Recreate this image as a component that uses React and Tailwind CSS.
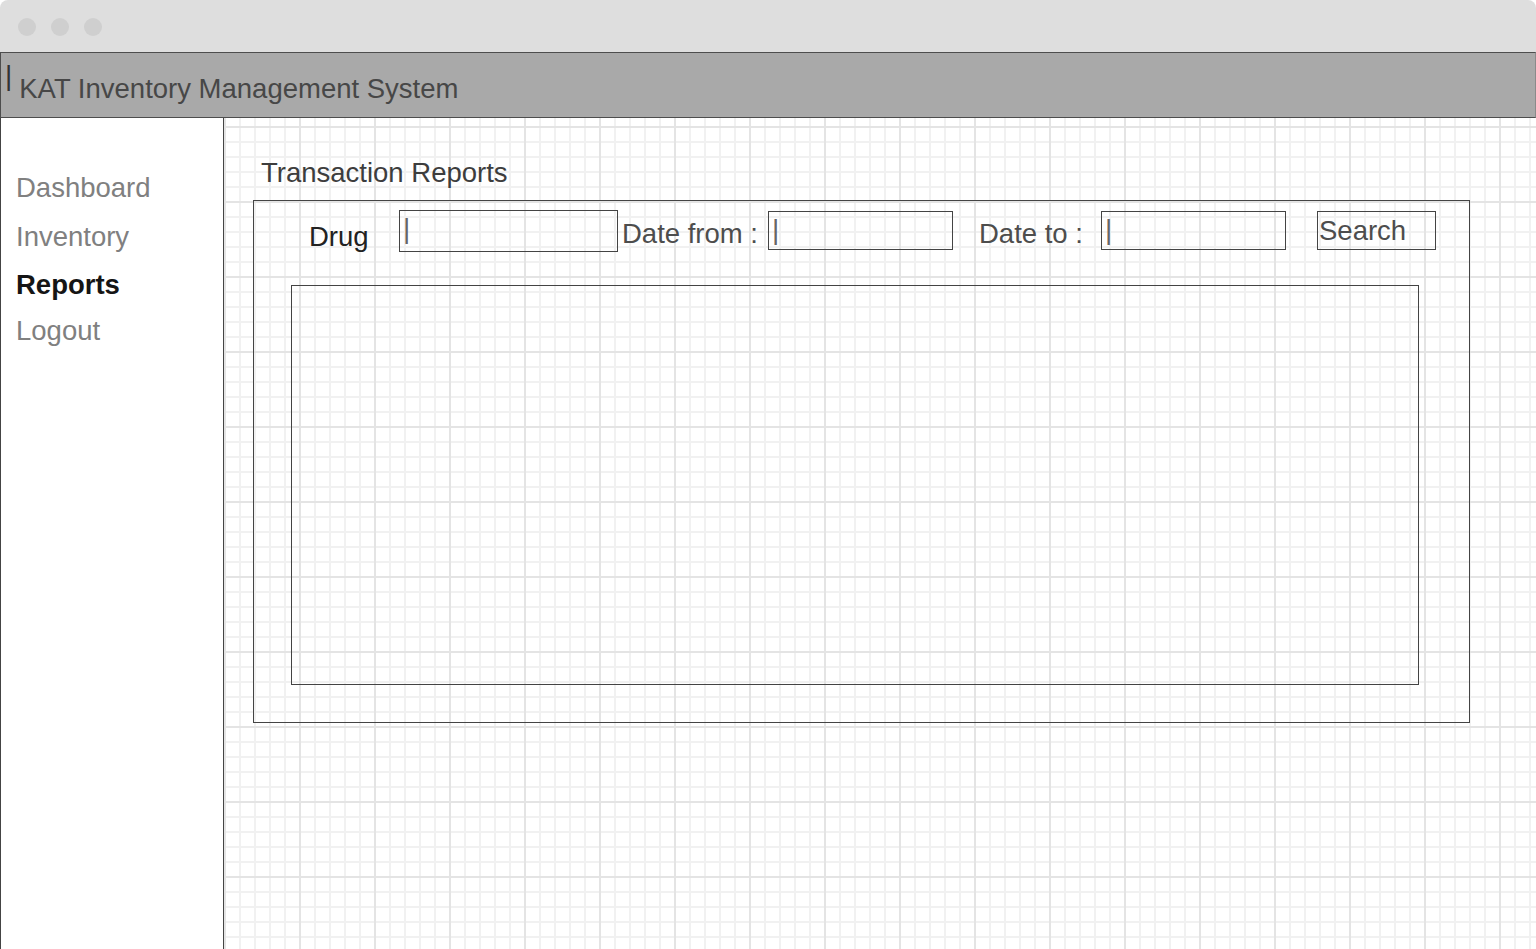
import React from 'react'

const font = "font-['Liberation_Sans',Arial,sans-serif]"

const NavItem = ({ label, active, className = '' }) => (
  <div
    className={`text-[27.5px] leading-[31px] ${active ? 'font-bold text-[#151515]' : 'text-[#808080]'} ${className}`}
  >
    {label}
  </div>
)

const Field = ({ width, height, className = '' }) => (
  <div className={`border border-[#444] flex items-start overflow-hidden ${className}`} style={{ width, height }}>
    <span className="ml-[3px] mt-[4px] text-[28px] leading-[28px] text-[#666]">|</span>
  </div>
)

export default function App() {
  return (
    <div className={`h-screen w-full overflow-hidden flex flex-col bg-white ${font}`}>
      {/* window chrome */}
      <div className="h-[52px] shrink-0 bg-[#dedede] rounded-t-[8px] flex items-center gap-[15px] pl-[18px] pt-[2px]">
        <span className="w-[18px] h-[18px] rounded-full bg-[#cfcfcf]" />
        <span className="w-[18px] h-[18px] rounded-full bg-[#cfcfcf]" />
        <span className="w-[18px] h-[18px] rounded-full bg-[#cfcfcf]" />
      </div>

      {/* header */}
      <div className="h-[66px] shrink-0 bg-[#a9a9a9] border-t border-b border-l border-[#4d4d4d] border-r border-r-[#8a8a8a] flex items-start">
        <span className="ml-[4px] mt-[9px] text-[28px] leading-[28px] text-[#333]">|</span>
        <span className="ml-[7px] mt-[20px] text-[27.5px] leading-[31px] text-[#474747]">
          KAT Inventory Management System
        </span>
      </div>

      <div className="flex flex-1 min-h-0">
        {/* sidebar */}
        <div className="w-[224px] shrink-0 border-l border-r border-[#444] pl-[15px] pt-[54px]">
          <NavItem label="Dashboard" />
          <NavItem label="Inventory" className="mt-[18px]" />
          <NavItem label="Reports" active className="mt-[17px]" />
          <NavItem label="Logout" className="mt-[15px]" />
        </div>

        {/* main canvas */}
        <div className="flex-1 pl-[29px] pt-[39px] bg-[linear-gradient(to_right,#e4e4e4_2px,transparent_2px),linear-gradient(to_bottom,#e4e4e4_2px,transparent_2px),linear-gradient(to_right,#f1f1f1_2px,transparent_2px),linear-gradient(to_bottom,#f1f1f1_2px,transparent_2px)] bg-[size:75px_75px,75px_75px,15px_15px,15px_15px] bg-[position:0px_8px]">
          <div className="ml-[8px] text-[27.5px] leading-[31px] text-[#3d3d3d]">Transaction Reports</div>

          <div className="mt-[12px] w-[1217px] h-[523px] border border-[#444]">
            <div className="flex items-start pt-[9px] text-[27.5px] leading-[31px]">
              <div className="ml-[55px] w-[90px] mt-[11px] text-[#222]">Drug</div>
              <Field width={219} height={42} />
              <div className="ml-[4px] w-[146px] mt-[8px] text-[#4d4d4d]">Date from :</div>
              <Field width={185} height={39} className="mt-[1px]" />
              <div className="ml-[26px] w-[122px] mt-[8px] text-[#4d4d4d]">Date to :</div>
              <Field width={185} height={39} className="mt-[1px]" />
              <button className="ml-[31px] mt-[1px] w-[119px] h-[39px] border border-[#444] text-left pl-[1px] pt-[3px] flex items-start text-[#4d4d4d]">
                Search
              </button>
            </div>

            <div className="ml-[37px] mt-[33px] w-[1128px] h-[400px] border border-[#444]" />
          </div>
        </div>
      </div>
    </div>
  )
}
